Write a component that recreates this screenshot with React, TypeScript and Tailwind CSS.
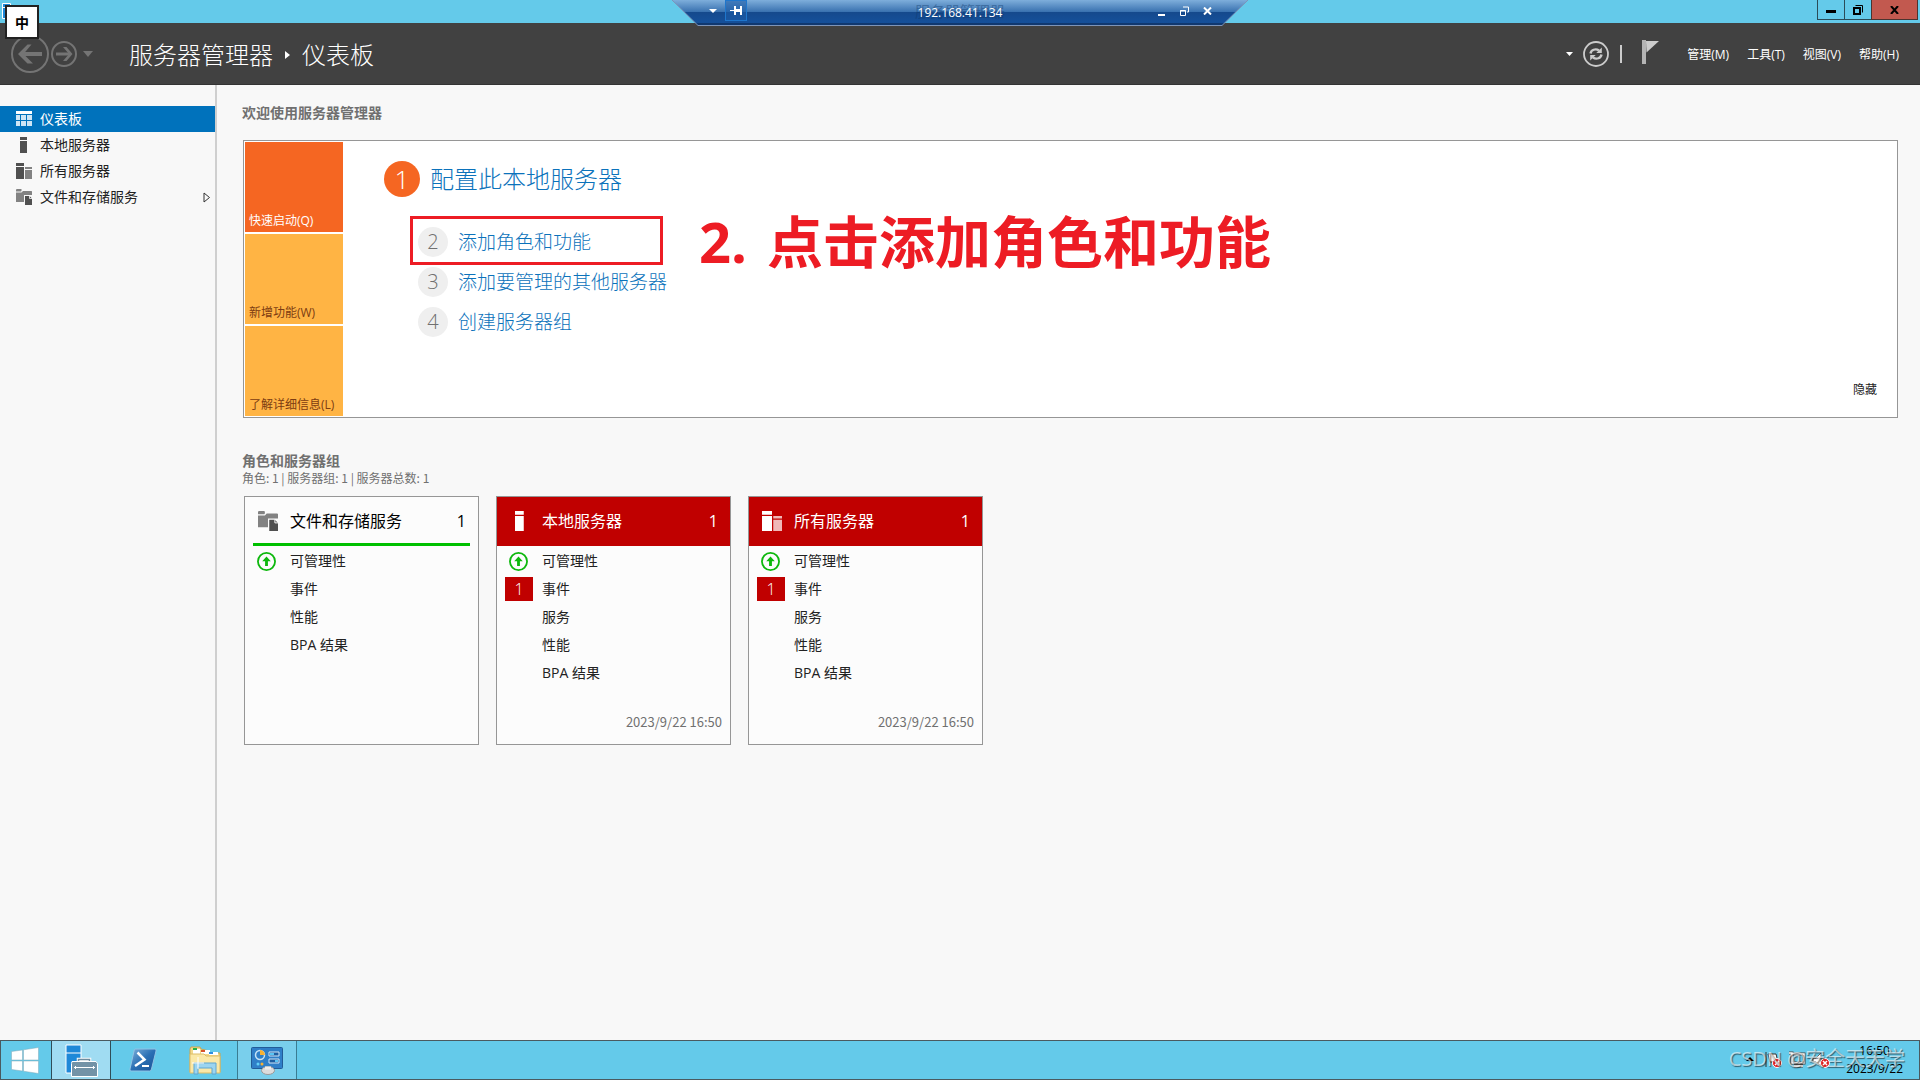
import type { ReactNode } from 'react';

type IconProps = { tone?: 'dark' | 'light'; size?: number };

function DashboardIcon() {
  return (
    <svg width="16" height="16" viewBox="0 0 16 16">
      <rect width="16" height="3" fill="#fff" />
      <g fill="#cfe6f5">
        <rect y="4" width="4" height="5" />
        <rect x="5" y="4" width="5" height="5" />
        <rect x="11" y="4" width="5" height="5" />
        <rect y="10" width="4" height="5" />
        <rect x="5" y="10" width="5" height="5" />
        <rect x="11" y="10" width="5" height="5" />
      </g>
    </svg>
  );
}

function ServerIcon({ tone = 'dark', size = 16 }: IconProps) {
  return (
    <svg width={size} height={size} viewBox="0 0 16 16" fill={tone === 'dark' ? '#505050' : '#fff'}>
      <rect x="4" width="7" height="3" />
      <rect x="4" y="4" width="7" height="12" />
    </svg>
  );
}

function ServersIcon({ tone = 'dark', size = 16 }: IconProps) {
  return (
    <svg width={size} height={size} viewBox="0 0 16 16" fill={tone === 'dark' ? '#505050' : '#fff'}>
      <rect width="8" height="3" />
      <rect y="4" width="8" height="12" />
      <g fill={tone === 'dark' ? '#828282' : '#efb8b8'}>
        <rect x="9" y="4" width="7" height="2" />
        <rect x="9" y="7" width="7" height="9" />
      </g>
    </svg>
  );
}

function StorageIcon({ size = 16 }: IconProps) {
  return (
    <svg width={size} height={size} viewBox="0 0 16 16">
      <path d="M0 .5L.5 0H5l.5.5V2L5 2.500H0z" fill="#828282" />
      <path d="M0 3.500h5.500L7 2h8.500l.5.5V6H8v7H0z" fill="#828282" />
      <path d="M9 7h4.500L16 9.500V16H9z" fill="#505050" />
      <path d="M13.500 6.500v3H16" fill="none" stroke="#f8f8f8" strokeWidth=".8" />
    </svg>
  );
}

function UpIcon() {
  return (
    <svg width="19" height="19" viewBox="0 0 20 20" className="block shrink-0">
      <circle cx="10" cy="10" r="9" fill="none" stroke="#0db80d" strokeWidth="1.900" />
      <path d="M10 4.800l4.500 5h-3v5h-3v-5h-3z" fill="#0db80d" />
    </svg>
  );
}

function ConnectionBar() {
  return (
    <div className="absolute left-1/2 top-0 z-10 h-[26px] w-[576px] -translate-x-1/2">
      <svg width="576" height="26" viewBox="0 0 576 26" className="absolute inset-0">
        <defs>
          <linearGradient id="bar" x1="0" y1="0" x2="0" y2="1">
            <stop offset="0" stopColor="#7eaedb" />
            <stop offset=".46" stopColor="#3a72b0" />
            <stop offset=".47" stopColor="#15498c" />
            <stop offset=".88" stopColor="#15509a" />
            <stop offset=".92" stopColor="#103870" />
          </linearGradient>
        </defs>
        <path d="M0 0L26 25.500H550L576 0z" fill="url(#bar)" />
        <path d="M0 0L26 25.500H550L576 0" fill="none" stroke="#7d94b8" />
      </svg>
      <div className="relative flex h-[21px] items-center pl-[37px] pr-[36px] text-white">
        <button aria-label="菜单" className="mr-2">
          <svg width="8" height="4" viewBox="0 0 8 4" className="block">
            <path d="M0 0h8L4 4z" fill="#fff" />
          </svg>
        </button>
        <button aria-label="固定" className="flex h-[21px] w-[22px] items-center justify-center border border-[#1f76cc] bg-[#1c5ca6]/60">
          <svg width="12" height="9" viewBox="0 0 12 9" fill="#fff">
            <rect y="4" width="4" height="1" />
            <rect x="4" width="2" height="9" />
            <path d="M6 3h4V0h2v9h-2V6H6z" />
          </svg>
        </button>
        <div className="grid flex-1 place-items-center pl-[15px]">
          <span className="col-start-1 row-start-1 text-[15px] leading-5 text-[#0d3566]/40">服务器管理器</span>
          <span className="col-start-1 row-start-1 pt-1 text-[12px] leading-5">192.168.41.134</span>
        </div>
        <div className="flex items-center gap-[14px]">
          <button aria-label="最小化">
            <svg width="8" height="10" viewBox="0 0 8 10" className="block">
              <rect y="8" width="7" height="2" fill="#fff" />
            </svg>
          </button>
          <button aria-label="还原">
            <svg width="9" height="10" viewBox="0 0 9 10" fill="none" stroke="#fff" className="block">
              <path d="M3 1h5.500v5H7M.5 4.500h5v5h-5zM0 5h6" />
            </svg>
          </button>
          <button aria-label="关闭">
            <svg width="9" height="8" viewBox="0 0 9 8" className="block">
              <path d="M1 .5l7 7M8 .5l-7 7" stroke="#fff" strokeWidth="2" />
            </svg>
          </button>
        </div>
      </div>
    </div>
  );
}

function TitleBar() {
  return (
    <div className="relative flex h-[23px] shrink-0 items-start justify-end bg-[#64caea] pr-0.5">
      <svg width="9" height="16" viewBox="0 0 9 16" className="absolute left-0.5 top-[3px]">
        <path d="M.5 .5h8v15h-8zM0 4.500h9" fill="#1e88d8" stroke="#fff" />
      </svg>
      <div className="absolute left-[5px] top-[5px] z-10 flex h-[34px] w-[34px] items-center justify-center border-2 border-[#222] bg-white text-[14px] font-bold text-black">
        中
      </div>
      <ConnectionBar />
      <button aria-label="最小化" className="flex h-5 w-7 items-center justify-center border border-t-0 border-[#2b4c58]">
        <svg width="10" height="10" viewBox="0 0 10 10"><rect y="5" width="10" height="3" fill="#000" /></svg>
      </button>
      <button aria-label="还原" className="flex h-5 w-[26px] items-center justify-center border-b border-[#2b4c58]">
        <svg width="10" height="10" viewBox="0 0 10 10" fill="none" stroke="#000">
          <path d="M2.500 .5h7v7" />
          <path d="M1 3h6v6H1z" strokeWidth="2" />
        </svg>
      </button>
      <button aria-label="关闭" className="flex h-5 w-[47px] items-center justify-center border border-t-0 border-[#4b3430] bg-[#c2594f]">
        <svg width="9" height="8" viewBox="0 0 9 8"><path d="M1 0l7 8M8 0l-7 8" stroke="#000" strokeWidth="2" /></svg>
      </button>
    </div>
  );
}

const menus = ['管理(M)', '工具(T)', '视图(V)', '帮助(H)'];

function Header() {
  return (
    <header className="flex h-[62px] shrink-0 items-center border-b border-[#333] bg-[#414141] pl-[11px] pr-[21px] text-white">
      <button aria-label="后退">
        <svg width="38" height="38" viewBox="0 0 38 38" fill="none" stroke="#747474" className="block">
          <circle cx="19" cy="19" r="18" strokeWidth="2" />
          <path d="M31 19H10" strokeWidth="4" />
          <path d="M20.500 9.500h-4L7 19l9.500 9.500h5.500L12.500 19z" fill="#747474" stroke="none" />
        </svg>
      </button>
      <button aria-label="前进" className="ml-0.5">
        <svg width="26" height="26" viewBox="0 0 26 26" fill="none" stroke="#747474" className="block">
          <circle cx="13" cy="13" r="12" strokeWidth="2" />
          <path d="M5 13h14" strokeWidth="3" />
          <path d="M12 6h3.500l6 7-6 7H12l6-7z" fill="#747474" stroke="none" />
        </svg>
      </button>
      <button aria-label="历史" className="ml-1.5">
        <svg width="10" height="6" viewBox="0 0 10 6" className="block"><path d="M0 0h10L5 6z" fill="#747474" /></svg>
      </button>
      <h1 className="ml-9 flex items-center pt-0.5 text-[24px] font-light leading-8">
        服务器管理器
        <svg width="5" height="8" viewBox="0 0 5 8" className="mx-3"><path d="M0 0l5 4-5 4z" fill="#fff" /></svg>
        仪表板
      </h1>
      <div className="ml-auto flex items-center">
        <button aria-label="通知列表" className="mr-[10px]">
          <svg width="7" height="4" viewBox="0 0 7 4" className="block"><path d="M0 0h7L3.500 4z" fill="#fff" /></svg>
        </button>
        <button aria-label="刷新">
          <svg width="26" height="26" viewBox="0 0 26 26" fill="none" stroke="#ccc" className="block">
            <circle cx="13" cy="13" r="12" strokeWidth="1.800" />
            <path d="M7.500 12.500c.5-3.500 5-5.500 8.500-3M18.500 13.500c-.5 3.500-5 5.500-8.500 3" strokeWidth="2.400" />
            <path d="M18.800 6.500v5.500h-5.500zM7.200 19.500V14h5.500z" fill="#ccc" stroke="none" />
          </svg>
        </button>
        <span className="ml-[11px] h-[18px] w-0.5 bg-[#ccc]" />
        <button aria-label="通知" className="ml-5 mr-7">
          <svg width="17" height="28" viewBox="0 0 17 28" className="block">
            <rect x="0" y="0" width="4" height="24" fill="#b4b4b4" />
            <path d="M4 1h13L4.500 12.500z" fill="#ccc" />
          </svg>
        </button>
        <nav className="flex gap-[18px] pt-0.5 text-[12px] leading-4">
          {menus.map((m) => (
            <button key={m}>{m}</button>
          ))}
        </nav>
      </div>
    </header>
  );
}

function NavItem({ icon, label, active, more }: { icon: ReactNode; label: string; active?: boolean; more?: boolean }) {
  return (
    <a
      href="#"
      className={`flex h-[26px] items-center pl-4 pr-1 text-[14px] leading-5 ${active ? 'bg-[#0072bc] text-white' : 'text-[#222]'}`}
    >
      <span className="mr-2">{icon}</span>
      {label}
      {more && (
        <svg width="8" height="11" viewBox="0 0 8 11" className="ml-auto">
          <path d="M1 1l5.500 4.500L1 10z" fill="none" stroke="#333" />
        </svg>
      )}
    </a>
  );
}

function Sidebar() {
  return (
    <aside className="w-[217px] shrink-0 border-r-2 border-[#cfcfcf] pt-[21px]">
      <NavItem icon={<DashboardIcon />} label="仪表板" active />
      <NavItem icon={<ServerIcon />} label="本地服务器" />
      <NavItem icon={<ServersIcon />} label="所有服务器" />
      <NavItem icon={<StorageIcon />} label="文件和存储服务" more />
    </aside>
  );
}

const steps = [
  { n: 2, label: '添加角色和功能' },
  { n: 3, label: '添加要管理的其他服务器' },
  { n: 4, label: '创建服务器组' },
];

function Welcome() {
  return (
    <section className="ml-px flex border border-[#969696] bg-white">
      <div className="flex w-[100px] shrink-0 flex-col gap-0.5 p-px text-[12px] leading-4">
        <button className="flex h-[90px] items-end bg-[#f56622] px-1 pb-[3px] text-white">快速启动(Q)</button>
        <button className="flex h-[90px] items-end bg-[#ffb444] px-1 pb-[3px] text-[#7c3c12]">新增功能(W)</button>
        <button className="flex h-[90px] items-end bg-[#ffb444] px-1 pb-[3px] text-[#7c3c12]">了解详细信息(L)</button>
      </div>
      <div className="relative flex-1 pl-10 pt-5">
        <a href="#" className="flex items-center gap-[10px] text-[24px] font-light leading-9 text-[#0b72bb]">
          <span className="flex h-9 w-9 items-center justify-center rounded-full bg-[#f56622] text-[26px] text-white">1</span>
          配置此本地服务器
        </a>
        <ol className="mt-[30px] flex flex-col gap-[10px] pl-[34px] text-[19px] font-light leading-[30px]">
          {steps.map((s) => (
            <li key={s.n} className="flex">
              <a href="#" className="flex items-center gap-[10px] text-[#0b72bb]">
                <span className="flex h-[30px] w-[30px] items-center justify-center rounded-full bg-[#efefef] text-[20px] text-[#707070]">
                  {s.n}
                </span>
                {s.label}
              </a>
            </li>
          ))}
        </ol>
        {/* Tutorial callout over the step list */}
        <div className="absolute left-[66px] top-[75px] flex h-[49px] items-center">
          <span className="h-[49px] w-[253px] border-[3px] border-[#ed1c24]" />
          <p className="ml-9 flex gap-5 whitespace-nowrap text-[56px] font-bold leading-[60px] text-[#ed1c24]">
            <span>2.</span>
            <span>点击添加角色和功能</span>
          </p>
        </div>
        <button className="absolute bottom-[19px] right-5 text-[12px] leading-4 text-[#222]">隐藏</button>
      </div>
    </section>
  );
}

type Row = { label: string; ok?: boolean; count?: number };

function Card({ icon, title, rows, alert, time }: { icon: ReactNode; title: string; rows: Row[]; alert?: boolean; time?: string }) {
  return (
    <article className="flex h-[249px] w-[235px] flex-col border border-[#969696] bg-[#fcfcfc]">
      <div
        className={`flex h-[49px] shrink-0 items-center text-[16px] leading-6 ${
          alert ? 'bg-[#c00000] px-2 pb-0.5 text-white' : 'mx-2 border-b-[3px] border-[#00c000] pt-px text-black'
        }`}
      >
        <span className="flex w-[37px] pl-[5px]">{icon}</span>
        <h3>{title}</h3>
        <span className="ml-auto pr-1">1</span>
      </div>
      <ul className="pt-px text-[14px] leading-7 text-[#222]">
        {rows.map((r) => (
          <li key={r.label} className="flex items-center pl-2">
            <span className="flex w-[37px] shrink-0">
              {r.ok && <span className="pl-1"><UpIcon /></span>}
              {r.count && (
                <span className="flex h-6 w-7 items-center justify-center bg-[#c00000] text-[16px] font-light text-white">{r.count}</span>
              )}
            </span>
            {r.label}
          </li>
        ))}
      </ul>
      {time && (
        <time className="mt-auto pb-[14px] pr-2 text-right font-['Noto_Sans_CJK_SC',sans-serif] text-[13px] leading-4 text-[#707070]">
          {time}
        </time>
      )}
    </article>
  );
}

const serverRows: Row[] = [
  { label: '可管理性', ok: true },
  { label: '事件', count: 1 },
  { label: '服务' },
  { label: '性能' },
  { label: 'BPA 结果' },
];
const storageRows = serverRows.filter((r) => r.label !== '服务').map((r) => ({ label: r.label, ok: r.ok }));

function Taskbar() {
  return (
    <footer className="relative flex h-10 shrink-0 border border-[#4a5a60] bg-[#64caea]">
      <button aria-label="开始" className="flex w-[50px] items-center justify-center pr-0.5">
        <svg width="28" height="27" viewBox="0 0 28 27" fill="#fff" stroke="#7fa9b8" strokeWidth=".5">
          <path d="M.5 4.500L11.500 3v10H.5zM12.500 2.800L27.500.5V13h-15zM.5 14h11v10L.5 22.500zM12.500 14h15v12.500l-15-2.300z" />
        </svg>
      </button>
      <button aria-label="服务器管理器" className="flex w-[60px] items-center justify-center border-x border-[#2f4d58] bg-[#a0dcf2]">
        <svg width="33" height="33" viewBox="0 0 33 33">
          <path d="M1 1h15v28H1z" fill="#1e88d8" stroke="#fff" />
          <path d="M1 9h15" stroke="#fff" />
          <path d="M13.500 18v-2.500h11V18" fill="none" stroke="#fff" strokeWidth="3.500" />
          <path d="M13.500 18v-2.500h11V18" fill="none" stroke="#6e8ca0" strokeWidth="1.500" />
          <path d="M7 17.500h24l1.500 2v13h-26v-13z" fill="#7393a7" stroke="#fff" />
          <path d="M9 23.500h21M10.500 22v3M28.500 22v3" stroke="#fff" />
        </svg>
      </button>
      <button aria-label="PowerShell" className="flex w-16 items-center justify-center">
        <svg width="28" height="24" viewBox="0 0 28 24">
          <defs>
            <linearGradient id="ps" x1="0" y1="0" x2="1" y2="1">
              <stop offset="0" stopColor="#7fb2dc" />
              <stop offset=".5" stopColor="#2a6fb4" />
              <stop offset="1" stopColor="#1a5296" />
            </linearGradient>
          </defs>
          <path d="M6 1h20q1.500 0 1 2l-4.500 18q-.5 2-2 2H2Q.5 23 1 21L5 3q.2-2 1-2z" fill="url(#ps)" stroke="#91c3e4" />
          <path d="M8.500 4.500l7 7L6 18" fill="none" stroke="#fff" strokeWidth="2.500" />
          <path d="M13 18h7" stroke="#fff" strokeWidth="2" />
        </svg>
      </button>
      <button aria-label="文件资源管理器" className="flex w-[62px] items-center justify-center pr-0.5">
        <svg width="32" height="29" viewBox="0 0 32 29">
          <path d="M1 3l1-2h9l1 2 8 2v2h11v19H1z" fill="#f2d98c" stroke="#c9a651" />
          <path d="M4 3h7v5H4z" fill="#fff" />
          <rect x="4" y="2" width="4" height="2" fill="#22b14c" />
          <path d="M12 4h9v4h-9z" fill="#fff" />
          <rect x="12" y="4" width="4" height="2" fill="#d9532c" />
          <path d="M20 6h9v3h-9z" fill="#fff" />
          <rect x="20" y="6" width="4" height="2" fill="#2d8ee0" />
          <path d="M1 8h14l2 2h14v17H1z" fill="#fae8a8" stroke="#dcbc68" />
          <path d="M5 28V17h22v11h-4v-6H9v6z" fill="#9bd4f0" stroke="#5fa6d0" />
          <path d="M9 11v12M3 17h12" stroke="#fff" />
        </svg>
      </button>
      <button aria-label="控制面板" className="flex w-[60px] items-center justify-center border-x border-[#3a7c92] bg-[#79cfec]">
        <svg width="32" height="29" viewBox="0 0 32 29">
          <rect x=".5" y="1.500" width="31" height="21" rx="1" fill="#2f7fc8" stroke="#225c98" />
          <circle cx="9" cy="9" r="4.500" fill="none" stroke="#c5e2f6" strokeWidth="1.500" />
          <path d="M9 9V4a5 5 0 0 1 5 5z" fill="#f8b133" />
          <path d="M18 6h10v4H18zM18 13h10v4H18z" fill="#1d5ea2" stroke="#cfe6f7" />
          <path d="M19 8h4M24 15h3" stroke="#59c4f4" strokeWidth="2" />
          <circle cx="7" cy="18" r="1.500" fill="#62d0f7" />
          <circle cx="11" cy="18" r="1.500" fill="#f8b133" />
          <ellipse cx="17" cy="24.500" rx="6.500" ry="4" fill="#dcdcdc" stroke="#999" />
          <path d="M14 20.500h6v3h-6z" fill="#eee" />
        </svg>
      </button>
      <div className="ml-auto flex items-center pr-4 text-black">
        <svg width="86" height="20" viewBox="0 0 86 20" className="mr-[14px]">
          <path d="M0 11l4-4 4 4z" />
          <path d="M20 2v15M22 4h8l2 8h-8z" fill="#fff" stroke="#333" />
          <circle cx="31" cy="13" r="4.500" fill="#e02020" stroke="#fff" />
          <path d="M29 11l4 4M33 11l-4 4" stroke="#fff" strokeWidth="1.500" />
          <path d="M46 4h12v9H46zM48 16h9M43 3h3v6" fill="none" stroke="#444" strokeWidth="3" />
          <path d="M46 4h12v9H46zM48 16h9M43 3h3v6" fill="none" stroke="#fff" strokeWidth="1.500" />
          <path d="M67 8h3l5-5v13l-5-4h-3z" fill="#fff" stroke="#666" />
          <circle cx="79" cy="13" r="4.500" fill="#e02020" stroke="#fff" />
          <path d="M77 11l4 4M81 11l-4 4" stroke="#fff" strokeWidth="1.500" />
        </svg>
        <div className="text-center text-[12px] leading-[18px]">
          <div>16:50</div>
          <div>2023/9/22</div>
        </div>
      </div>
      <span className="absolute right-[14px] top-1 text-[20px] leading-7 text-white/60 [text-shadow:1px_1px_1px_#0008]">CSDN @安全天天学</span>
    </footer>
  );
}

export default function App() {
  return (
    <div className="flex h-screen flex-col overflow-hidden bg-[#f8f8f8] font-['Open_Sans','Noto_Sans_CJK_SC',sans-serif]">
      <TitleBar />
      <Header />
      <div className="flex min-h-0 flex-1">
        <Sidebar />
        <main className="flex-1 pl-[25px] pr-[22px] pt-[18px]">
          <h2 className="mb-[17px] text-[14px] font-bold leading-5 text-[#707070]">欢迎使用服务器管理器</h2>
          <Welcome />
          <h2 className="mt-[34px] text-[14px] font-bold leading-[18px] text-[#707070]">角色和服务器组</h2>
          <p className="mb-[10px] font-['Noto_Sans_CJK_SC',sans-serif] text-[12px] leading-4 text-[#707070]">
            角色: 1 | 服务器组: 1 | 服务器总数: 1
          </p>
          <div className="flex gap-[17px] pl-0.5">
            <Card icon={<StorageIcon size={20} />} title="文件和存储服务" rows={storageRows} />
            <Card icon={<ServerIcon tone="light" size={20} />} title="本地服务器" rows={serverRows} alert time="2023/9/22 16:50" />
            <Card icon={<ServersIcon tone="light" size={20} />} title="所有服务器" rows={serverRows} alert time="2023/9/22 16:50" />
          </div>
        </main>
      </div>
      <Taskbar />
    </div>
  );
}
